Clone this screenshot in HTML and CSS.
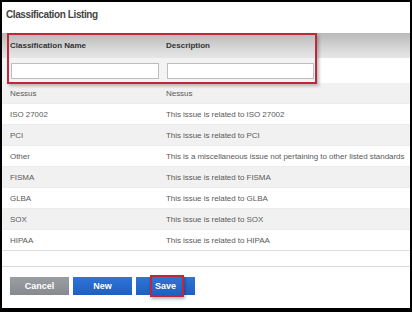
FILE: index.html
```html
<!DOCTYPE html>
<html>
<head>
<meta charset="utf-8">
<link rel="stylesheet" href="styles.css">
</head>
<body>
<div class="frame">
  <div class="title">Classification Listing</div>
  <div class="grid">
    <div class="head">
      <div class="hrow">
        <div class="c1">Classification Name</div>
        <div class="c2">Description</div>
      </div>
      <div class="frow">
        <div class="c1"><input class="inp1" type="text"></div>
        <div class="c2"><input class="inp2" type="text"></div>
      </div>
      <div class="mark1"></div>
    </div>
    <div class="row alt"><div class="c1">Nessus</div><div class="c2">Nessus</div></div>
    <div class="row"><div class="c1">ISO 27002</div><div class="c2">This issue is related to ISO 27002</div></div>
    <div class="row alt"><div class="c1">PCI</div><div class="c2">This issue is related to PCI</div></div>
    <div class="row"><div class="c1">Other</div><div class="c2">This is a miscellaneous issue not pertaining to other listed standards</div></div>
    <div class="row alt"><div class="c1">FISMA</div><div class="c2">This issue is related to FISMA</div></div>
    <div class="row"><div class="c1">GLBA</div><div class="c2">This issue is related to GLBA</div></div>
    <div class="row alt"><div class="c1">SOX</div><div class="c2">This issue is related to SOX</div></div>
    <div class="row last"><div class="c1">HIPAA</div><div class="c2">This issue is related to HIPAA</div></div>
  </div>
  <div class="footer">
    <button class="btn gray">Cancel</button>
    <button class="btn blue">New</button>
    <button class="btn blue save">Save<span class="mark2"></span></button>
  </div>
</div>
</body>
</html>
```
FILE: styles.css
```css
html, body { margin: 0; padding: 0; }
body { background: #000; font-family: "Liberation Sans", Arial, sans-serif; }
.frame {
  width: 412px; height: 312px; box-sizing: border-box;
  border: 2px solid #000; border-bottom-width: 4px;
  background: #fff; display: flex; flex-direction: column;
}
.title {
  height: 31px; box-sizing: border-box; padding: 7px 0 0 4px;
  font-size: 10px; letter-spacing: -0.4px; font-weight: bold; color: #444;
}
.grid { display: flex; flex-direction: column; }
.head { position: relative; }
.hrow {
  height: 25px; display: flex; align-items: center;
  background: linear-gradient(#b9b9b9, #d6d6d6 60%, #e6e6e6);
  font-size: 8px; font-weight: bold; color: #333;
}
.frow {
  height: 25px; display: flex; align-items: center;
  background: linear-gradient(90deg, #f3f3f3 0, #f3f3f3 314px, #fff 318px);
}
.c1 { width: 156px; padding-left: 8px; box-sizing: border-box; flex: none; }
.c2 { flex: 1; padding-left: 8px; box-sizing: border-box; }
.frow .c1 { padding-left: 9px; }
.frow .c2 { padding-left: 9px; }
input {
  display: block; height: 16px; box-sizing: border-box; margin: 0; padding: 0;
  border: 1px solid #bdbdbd; background: #fff;
}
.inp1 { width: 148px; }
.inp2 { width: 147px; }
.mark1 {
  position: absolute; left: 5px; top: 0; width: 310px; height: 51px; box-sizing: border-box;
  border: 2px solid #c0283a; box-shadow: 2px 2px 3px rgba(0,0,0,0.25);
}
.row {
  height: 21px; display: flex; align-items: center; box-sizing: border-box;
  font-size: 8px; letter-spacing: -0.05px; color: #5a5a5a; border-bottom: 1px solid #ececec;
}
.row.alt { background: #f1f1f1; }
.row.last { border-bottom: 1px solid #dedede; }
.footer {
  margin-top: 15px; border-top: 1px solid #d8d8d8;
  padding: 10px 0 0 8px; display: flex; gap: 4px;
}
.btn {
  width: 59px; height: 18px; border: 0; margin: 0; padding: 0;
  font-family: "Liberation Sans", Arial, sans-serif; font-size: 9px; font-weight: bold; color: #fff;
  position: relative;
}
.gray { background: linear-gradient(#9a9ea2, #878b90); }
.blue { background: linear-gradient(#2f74d6, #1f5fc4); }
.mark2 {
  position: absolute; left: 14px; top: -2px; width: 34px; height: 22px; box-sizing: border-box;
  border: 2px solid #c0283a; box-shadow: 1px 2px 3px rgba(0,0,0,0.3);
}
```
